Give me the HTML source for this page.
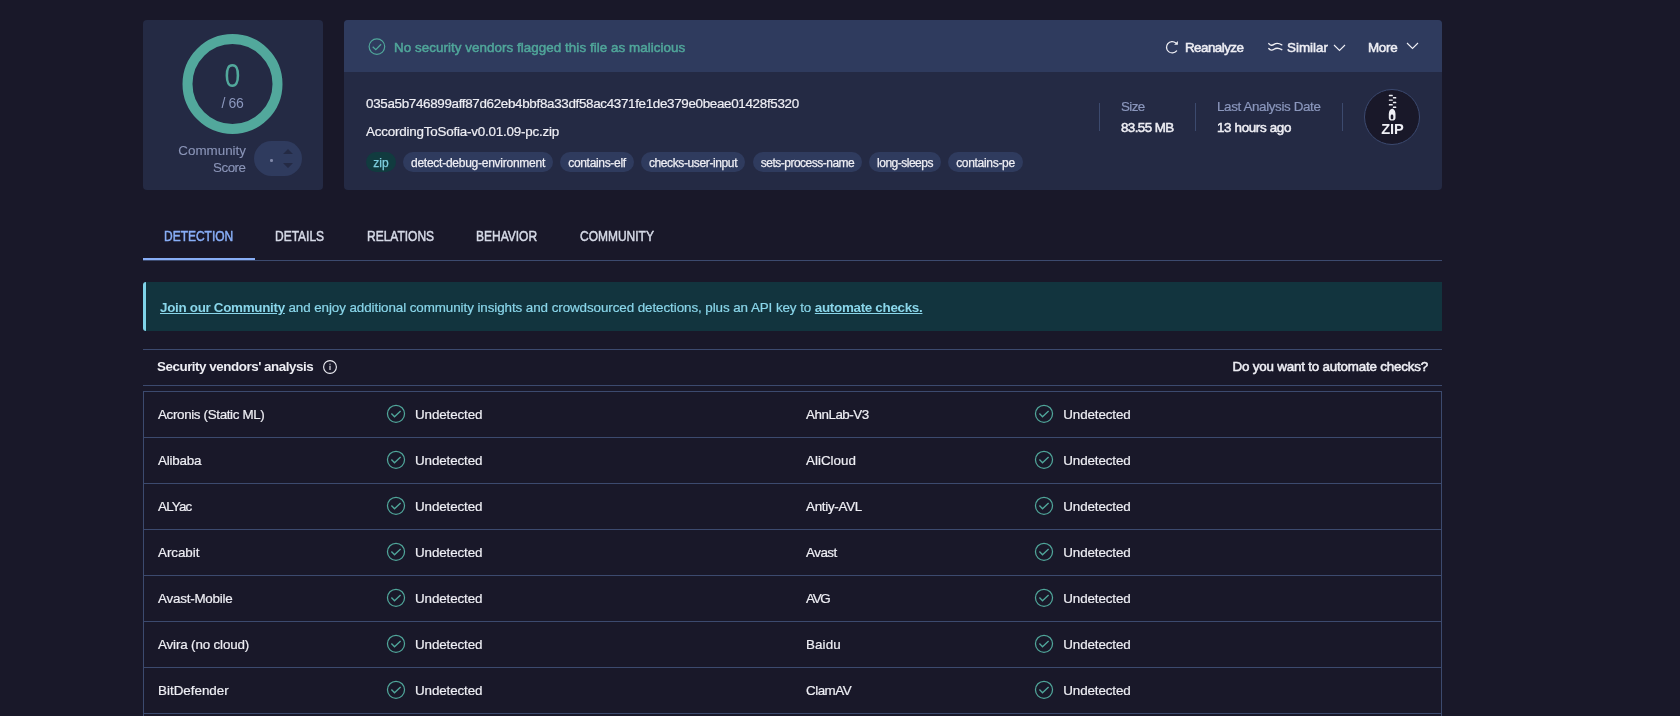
<!DOCTYPE html>
<html><head><meta charset="utf-8">
<style>
*{box-sizing:border-box;margin:0;padding:0}
html,body{width:1680px;height:716px;overflow:hidden;background:#191829;font-family:"Liberation Sans",sans-serif;color:#eeeef4}
.abs{position:absolute}
.t{position:absolute;white-space:nowrap;line-height:16px;font-size:13.4px;-webkit-text-stroke-width:0.2px}
.card{position:absolute;top:20px;height:170px;background:#242a44;border-radius:4px;overflow:hidden}
.hdr{position:absolute;left:0;top:0;right:0;height:52px;background:#2f3b5e}
.b{font-weight:700;-webkit-text-stroke-width:0}
.sb{-webkit-text-stroke-width:0.5px}
.tag{position:absolute;top:132px;height:20px;border-radius:10px;background:#2f3b5e;color:#eeeef4;font-size:12px;line-height:22px;text-align:center;white-space:nowrap;font-weight:400;-webkit-text-stroke-width:0.25px}
.tab{position:absolute;top:228px;font-weight:400;font-size:14px;line-height:17px;letter-spacing:0;color:#d5d9e6;-webkit-text-stroke-width:0.5px;transform:scaleX(0.856);transform-origin:0 0;white-space:nowrap}
.row{position:absolute;left:143px;width:1299px;height:46px;border-bottom:1px solid #3c4a6e}
.vn{position:absolute;top:0;line-height:45px;font-size:13.4px;color:#eeeef4;white-space:nowrap;-webkit-text-stroke-width:0.2px}
.ck{position:absolute;top:12px;width:20px;height:20px}
#root{position:absolute;left:0;top:0;width:1680px;height:716px;will-change:transform;overflow:hidden}
</style></head><body><div id="root">

<!-- Left community score card -->
<div class="card" style="left:143px;width:180px">
  <svg class="abs" style="left:0;top:0" width="180" height="170">
    <circle cx="89.5" cy="64" r="45" fill="none" stroke="#52a89c" stroke-width="10"/>
  </svg>
  <div class="t" style="left:0;width:179px;text-align:center;top:38px;font-size:33px;line-height:36px;color:#52a89c;transform:scaleX(0.86);transform-origin:89.5px 0;-webkit-text-stroke-width:0">0</div>
  <div class="t" style="left:0;width:179px;text-align:center;top:74.5px;font-size:14px;color:#8b97bd;letter-spacing:-0.4px;-webkit-text-stroke-width:0">/ 66</div>
  <div class="t" style="left:0;width:103px;text-align:right;top:122px;color:#8b95b8;line-height:17px;-webkit-text-stroke-width:0.1px">Community</div>
  <div class="t" style="left:0;width:102.5px;text-align:right;top:139px;color:#8b95b8;line-height:17px;letter-spacing:-0.5px;-webkit-text-stroke-width:0.1px">Score</div>
  <div class="abs" style="left:111px;top:121px;width:48px;height:35px;border-radius:17.5px;background:#2f3b5e"></div>
  <div class="abs" style="left:127.3px;top:139.2px;width:2.6px;height:2.6px;border-radius:50%;background:#7f88a8"></div>
  <svg class="abs" style="left:138px;top:128px" width="14" height="22"><path d="M2 6 L7 1 L12 6 Z M2 15 L7 20 L12 15 Z" fill="#242a44"/></svg>
</div>

<!-- Right file card -->
<div class="card" style="left:344px;width:1098px">
  <div class="hdr"></div>
  <svg class="abs" style="left:23.5px;top:18px" width="18" height="18" viewBox="0 0 18 18"><circle cx="8.9" cy="8.6" r="7.8" fill="none" stroke="#50a69a" stroke-width="1.2"/><path d="M4.7 8.8 L7.8 11.7 L13.1 6.3" fill="none" stroke="#50a69a" stroke-width="1.3"/></svg>
  <div class="t sb" style="left:50px;top:20px;color:#50a69a;letter-spacing:0.05px">No security vendors flagged this file as malicious</div>

  <svg class="abs" style="left:821px;top:20px" width="16" height="16" viewBox="0 0 16 16"><path d="M10.9 2.9 A5.7 5.7 0 1 0 11.6 10.9" fill="none" stroke="#eeeef4" stroke-width="1.3" stroke-linecap="round"/><path d="M12.9 0.9 L12.9 4.7 L9.1 4.7 Z" fill="#eeeef4"/></svg>
  <div class="t sb" style="left:841px;top:20px;letter-spacing:-0.55px">Reanalyze</div>
  <svg class="abs" style="left:923px;top:20px" width="16" height="14" viewBox="0 0 16 14"><path d="M1.8 3.6 C3.2 5.6 5.3 5.6 7 4.4 C8.7 3.2 11 2.6 14.8 4.8 M1.8 8.5 C3.2 10.5 5.3 10.5 7 9.3 C8.7 8.1 11 7.5 14.8 9.7" fill="none" stroke="#eeeef4" stroke-width="1.4" stroke-linecap="round"/></svg>
  <div class="t sb" style="left:943px;top:20px;letter-spacing:0px">Similar</div>
  <svg class="abs" style="left:989px;top:24px" width="13" height="8" viewBox="0 0 13 8"><path d="M1 1 L6.5 6.5 L12 1" fill="none" stroke="#eeeef4" stroke-width="1.1"/></svg>
  <div class="t sb" style="left:1024px;top:20px;letter-spacing:-0.3px">More</div>
  <svg class="abs" style="left:1062px;top:22px" width="13" height="8" viewBox="0 0 13 8"><path d="M1 1 L6.5 6.5 L12 1" fill="none" stroke="#eeeef4" stroke-width="1.1"/></svg>

  <div class="t" style="left:22px;top:75.6px;letter-spacing:-0.32px">035a5b746899aff87d62eb4bbf8a33df58ac4371fe1de379e0beae01428f5320</div>
  <div class="t" style="left:22px;top:103.6px;letter-spacing:-0.2px">AccordingToSofia-v0.01.09-pc.zip</div>


  <div class="tag" style="left:22px;width:30px;background:#113b3f;color:#7fd0e0;letter-spacing:0px">zip</div>
  <div class="tag" style="left:59px;width:150px;letter-spacing:-0.25px">detect-debug-environment</div>
  <div class="tag" style="left:216px;width:74px;letter-spacing:-0.32px">contains-elf</div>
  <div class="tag" style="left:297px;width:104px;letter-spacing:-0.38px">checks-user-input</div>
  <div class="tag" style="left:409px;width:109px;letter-spacing:-0.5px">sets-process-name</div>
  <div class="tag" style="left:525px;width:72px;letter-spacing:-0.5px">long-sleeps</div>
  <div class="tag" style="left:604px;width:75px;letter-spacing:-0.3px">contains-pe</div>
  <div class="abs" style="left:755px;top:83px;width:1px;height:28px;background:#3c4a6e"></div>
  <div class="t" style="left:777px;top:79px;color:#8b97bd;letter-spacing:-0.6px">Size</div>
  <div class="t sb" style="left:777px;top:100px;letter-spacing:-0.6px">83.55 MB</div>
  <div class="abs" style="left:851px;top:83px;width:1px;height:28px;background:#3c4a6e"></div>
  <div class="t" style="left:873px;top:79px;color:#8b97bd;letter-spacing:-0.37px">Last Analysis Date</div>
  <div class="t sb" style="left:873px;top:100px;letter-spacing:-0.35px">13 hours ago</div>
  <div class="abs" style="left:998px;top:83px;width:1px;height:28px;background:#3c4a6e"></div>
  <div class="abs" style="left:1020px;top:69px;width:56px;height:56px;border-radius:50%;background:#191829;border:1px solid #3c4a70"></div>
  <svg class="abs" style="left:1020px;top:69px" width="56" height="56" viewBox="0 0 56 56">
    <g fill="#eeeef4">
      <rect x="24.8" y="5.8" width="4" height="1.4" rx="0.5"/>
      <rect x="28.9" y="8.1" width="3.4" height="1.4" rx="0.5"/>
      <rect x="24.8" y="10.4" width="4" height="1.4" rx="0.5"/>
      <rect x="28.9" y="12.8" width="3.4" height="1.4" rx="0.5"/>
      <rect x="24.8" y="15.1" width="4" height="1.4" rx="0.5"/>
      <rect x="28.9" y="17.5" width="3.4" height="1.4" rx="0.5"/>
    </g>
    <path d="M28.15 19.7 C30 19.7 31.5 22 31.5 25 L31.5 29 C31.5 30.6 30.2 31.6 28.15 31.6 C26.1 31.6 24.8 30.6 24.8 29 L24.8 25 C24.8 22 26.3 19.7 28.15 19.7 Z M28 25.4 C28.8 25.4 29.3 26 29.3 27 L29.3 29 C29.3 29.8 28.8 30.3 28 30.3 C27.2 30.3 26.7 29.8 26.7 29 L26.7 27 C26.7 26 27.2 25.4 28 25.4 Z" fill="#eeeef4" fill-rule="evenodd"/>
  </svg>
  <div class="t b" style="left:1020px;width:57px;text-align:center;top:101px;font-size:14.6px;letter-spacing:0px">ZIP</div>
</div>



<!-- Tabs -->
<div class="tab" style="left:164px;color:#88aef6">DETECTION</div>
<div class="tab" style="left:275px">DETAILS</div>
<div class="tab" style="left:367px">RELATIONS</div>
<div class="tab" style="left:476px">BEHAVIOR</div>
<div class="tab" style="left:580px">COMMUNITY</div>
<div class="abs" style="left:143px;top:260px;width:1299px;height:1px;background:#3c4a6e"></div>
<div class="abs" style="left:143px;top:258px;width:112px;height:2px;background:#88aef6"></div>

<!-- Banner -->
<div class="abs" style="left:143px;top:282px;width:1299px;height:49px;background:#12343e;border-left:3px solid #7fd3e8;border-radius:3px 0 0 3px"></div>
<div class="t" style="left:160px;top:300px;color:#8ad6ea;letter-spacing:-0.075px"><span class="b" style="text-decoration:underline;letter-spacing:-0.3px">Join our Community</span> and enjoy additional community insights and crowdsourced detections, plus an API key to <span class="b" style="text-decoration:underline;letter-spacing:-0.3px">automate checks.</span></div>

<!-- Vendors header -->
<div class="abs" style="left:143px;top:349px;width:1299px;height:1px;background:#3c4a6e"></div>
<div class="t b" style="left:157px;top:359px;letter-spacing:-0.47px">Security vendors' analysis</div>
<svg class="abs" style="left:322px;top:359px" width="16" height="16" viewBox="0 0 16 16"><circle cx="8" cy="8" r="6.4" fill="none" stroke="#eeeef4" stroke-width="1.1"/><rect x="7.45" y="6.7" width="1.1" height="4.3" fill="#eeeef4"/><circle cx="8" cy="5.2" r="0.6" fill="#eeeef4"/></svg>
<div class="t sb" style="left:1200px;width:228px;text-align:right;top:359px;letter-spacing:-0.2px">Do you want to automate checks?</div>
<div class="abs" style="left:143px;top:385px;width:1299px;height:1px;background:#3c4a6e"></div>

<!-- Table -->
<div class="abs" style="left:143px;top:391px;width:1299px;height:330px;border:1px solid #3c4a6e;border-bottom:none"></div>
<div class="row" style="top:392px"><div class="vn" style="left:15px;letter-spacing:-0.35px">Acronis (Static ML)</div><svg class="ck" style="left:243px" viewBox="0 0 20 20"><circle cx="10" cy="9.8" r="8.55" fill="none" stroke="#50a69a" stroke-width="1.25"/><path d="M5.4 9.5 L8.5 12.7 L14.6 6.9" fill="none" stroke="#50a69a" stroke-width="1.35"/></svg><div class="vn" style="left:272px;letter-spacing:-0.12px">Undetected</div><div class="vn" style="left:663px;letter-spacing:-0.47px">AhnLab-V3</div><svg class="ck" style="left:891px" viewBox="0 0 20 20"><circle cx="10" cy="9.8" r="8.55" fill="none" stroke="#50a69a" stroke-width="1.25"/><path d="M5.4 9.5 L8.5 12.7 L14.6 6.9" fill="none" stroke="#50a69a" stroke-width="1.35"/></svg><div class="vn" style="left:920.3px;letter-spacing:-0.12px">Undetected</div></div>
<div class="row" style="top:438px"><div class="vn" style="left:15px;letter-spacing:-0.2px">Alibaba</div><svg class="ck" style="left:243px" viewBox="0 0 20 20"><circle cx="10" cy="9.8" r="8.55" fill="none" stroke="#50a69a" stroke-width="1.25"/><path d="M5.4 9.5 L8.5 12.7 L14.6 6.9" fill="none" stroke="#50a69a" stroke-width="1.35"/></svg><div class="vn" style="left:272px;letter-spacing:-0.12px">Undetected</div><div class="vn" style="left:663px;letter-spacing:0px">AliCloud</div><svg class="ck" style="left:891px" viewBox="0 0 20 20"><circle cx="10" cy="9.8" r="8.55" fill="none" stroke="#50a69a" stroke-width="1.25"/><path d="M5.4 9.5 L8.5 12.7 L14.6 6.9" fill="none" stroke="#50a69a" stroke-width="1.35"/></svg><div class="vn" style="left:920.3px;letter-spacing:-0.12px">Undetected</div></div>
<div class="row" style="top:484px"><div class="vn" style="left:15px;letter-spacing:-0.8px">ALYac</div><svg class="ck" style="left:243px" viewBox="0 0 20 20"><circle cx="10" cy="9.8" r="8.55" fill="none" stroke="#50a69a" stroke-width="1.25"/><path d="M5.4 9.5 L8.5 12.7 L14.6 6.9" fill="none" stroke="#50a69a" stroke-width="1.35"/></svg><div class="vn" style="left:272px;letter-spacing:-0.12px">Undetected</div><div class="vn" style="left:663px;letter-spacing:-0.28px">Antiy-AVL</div><svg class="ck" style="left:891px" viewBox="0 0 20 20"><circle cx="10" cy="9.8" r="8.55" fill="none" stroke="#50a69a" stroke-width="1.25"/><path d="M5.4 9.5 L8.5 12.7 L14.6 6.9" fill="none" stroke="#50a69a" stroke-width="1.35"/></svg><div class="vn" style="left:920.3px;letter-spacing:-0.12px">Undetected</div></div>
<div class="row" style="top:530px"><div class="vn" style="left:15px;letter-spacing:-0.05px">Arcabit</div><svg class="ck" style="left:243px" viewBox="0 0 20 20"><circle cx="10" cy="9.8" r="8.55" fill="none" stroke="#50a69a" stroke-width="1.25"/><path d="M5.4 9.5 L8.5 12.7 L14.6 6.9" fill="none" stroke="#50a69a" stroke-width="1.35"/></svg><div class="vn" style="left:272px;letter-spacing:-0.12px">Undetected</div><div class="vn" style="left:663px;letter-spacing:-0.5px">Avast</div><svg class="ck" style="left:891px" viewBox="0 0 20 20"><circle cx="10" cy="9.8" r="8.55" fill="none" stroke="#50a69a" stroke-width="1.25"/><path d="M5.4 9.5 L8.5 12.7 L14.6 6.9" fill="none" stroke="#50a69a" stroke-width="1.35"/></svg><div class="vn" style="left:920.3px;letter-spacing:-0.12px">Undetected</div></div>
<div class="row" style="top:576px"><div class="vn" style="left:15px;letter-spacing:-0.22px">Avast-Mobile</div><svg class="ck" style="left:243px" viewBox="0 0 20 20"><circle cx="10" cy="9.8" r="8.55" fill="none" stroke="#50a69a" stroke-width="1.25"/><path d="M5.4 9.5 L8.5 12.7 L14.6 6.9" fill="none" stroke="#50a69a" stroke-width="1.35"/></svg><div class="vn" style="left:272px;letter-spacing:-0.12px">Undetected</div><div class="vn" style="left:663px;letter-spacing:-1.3px">AVG</div><svg class="ck" style="left:891px" viewBox="0 0 20 20"><circle cx="10" cy="9.8" r="8.55" fill="none" stroke="#50a69a" stroke-width="1.25"/><path d="M5.4 9.5 L8.5 12.7 L14.6 6.9" fill="none" stroke="#50a69a" stroke-width="1.35"/></svg><div class="vn" style="left:920.3px;letter-spacing:-0.12px">Undetected</div></div>
<div class="row" style="top:622px"><div class="vn" style="left:15px;letter-spacing:-0.15px">Avira (no cloud)</div><svg class="ck" style="left:243px" viewBox="0 0 20 20"><circle cx="10" cy="9.8" r="8.55" fill="none" stroke="#50a69a" stroke-width="1.25"/><path d="M5.4 9.5 L8.5 12.7 L14.6 6.9" fill="none" stroke="#50a69a" stroke-width="1.35"/></svg><div class="vn" style="left:272px;letter-spacing:-0.12px">Undetected</div><div class="vn" style="left:663px;letter-spacing:0.1px">Baidu</div><svg class="ck" style="left:891px" viewBox="0 0 20 20"><circle cx="10" cy="9.8" r="8.55" fill="none" stroke="#50a69a" stroke-width="1.25"/><path d="M5.4 9.5 L8.5 12.7 L14.6 6.9" fill="none" stroke="#50a69a" stroke-width="1.35"/></svg><div class="vn" style="left:920.3px;letter-spacing:-0.12px">Undetected</div></div>
<div class="row" style="top:668px"><div class="vn" style="left:15px;letter-spacing:0px">BitDefender</div><svg class="ck" style="left:243px" viewBox="0 0 20 20"><circle cx="10" cy="9.8" r="8.55" fill="none" stroke="#50a69a" stroke-width="1.25"/><path d="M5.4 9.5 L8.5 12.7 L14.6 6.9" fill="none" stroke="#50a69a" stroke-width="1.35"/></svg><div class="vn" style="left:272px;letter-spacing:-0.12px">Undetected</div><div class="vn" style="left:663px;letter-spacing:-0.5px">ClamAV</div><svg class="ck" style="left:891px" viewBox="0 0 20 20"><circle cx="10" cy="9.8" r="8.55" fill="none" stroke="#50a69a" stroke-width="1.25"/><path d="M5.4 9.5 L8.5 12.7 L14.6 6.9" fill="none" stroke="#50a69a" stroke-width="1.35"/></svg><div class="vn" style="left:920.3px;letter-spacing:-0.12px">Undetected</div></div>
</div></body></html>
